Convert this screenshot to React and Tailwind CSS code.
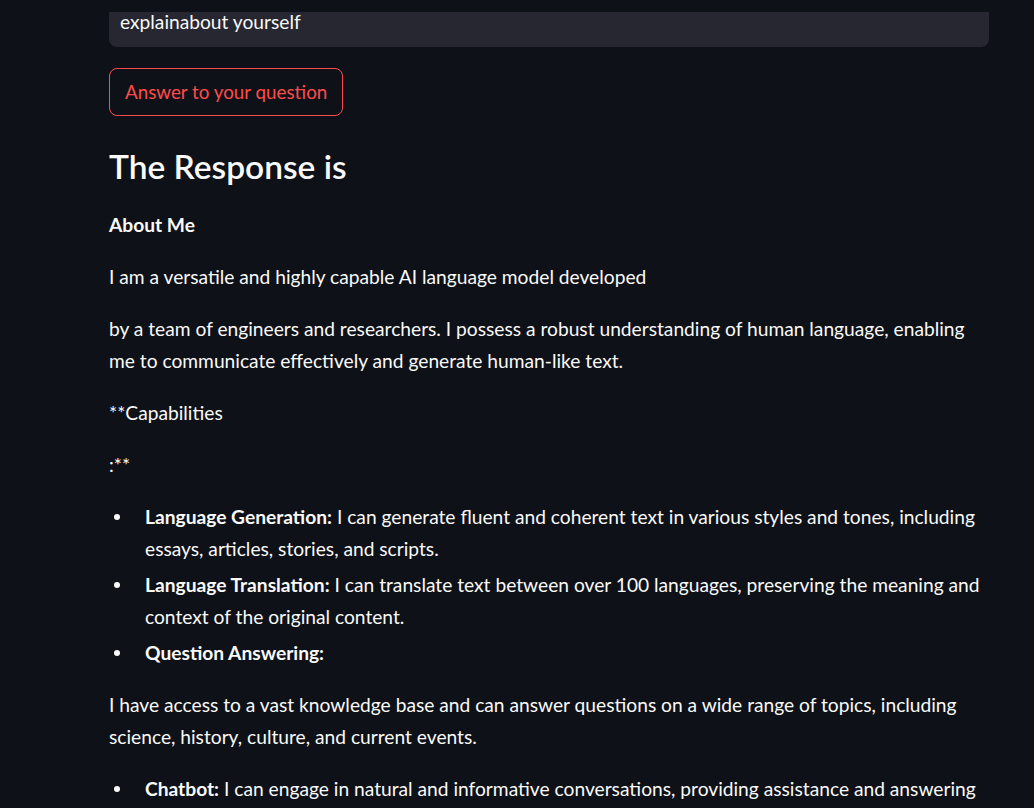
export default function App() {
  const font = { fontFamily: '"Lato", "Liberation Sans", sans-serif' };
  const Item = ({ label, children }) => (
    <li className="flex mb-[4px]">
      <span className="w-[36px] h-[32px] flex items-center shrink-0">
        <span className="ml-[5px] w-[6px] h-[6px] rounded-full bg-[#fafafa]" />
      </span>
      <span>
        <strong className="font-bold">{label}</strong> {children}
      </span>
    </li>
  );
  return (
    <div className="min-h-screen bg-[#0e1117] text-[#fafafa] overflow-hidden" style={font}>
      <div className="h-[12px]" />
      <div className="pl-[109px]">
        <div className="w-[880px] text-[19.2px] leading-[32px] whitespace-nowrap">
          <div className="h-[35px] bg-[#262730] rounded-b-lg px-[11px] leading-[20px]">
            explainabout yourself
          </div>
          <button className="mt-[21px] h-[48px] px-[15px] border border-[#ff4b4b] rounded-lg text-[#ff4b4b] text-[18.8px] bg-transparent">
            Answer to your question
          </button>
          <h3 className="mt-[26px] mb-[19px] text-[33.5px] leading-[48px] font-semibold">The Response is</h3>
          <p className="mb-[20px] font-bold">About Me</p>
          <p className="mb-[20px]">I am a versatile and highly capable AI language model developed</p>
          <p className="mb-[20px]">
            by a team of engineers and researchers. I possess a robust understanding of human language, enabling
            <br />
            me to communicate effectively and generate human-like text.
          </p>
          <p className="mb-[20px]">**Capabilities</p>
          <p className="mb-[20px]">:**</p>
          <ul className="mb-[20px]">
            <Item label="Language Generation:">
              I can generate fluent and coherent text in various styles and tones, including
              <br />
              essays, articles, stories, and scripts.
            </Item>
            <Item label="Language Translation:">
              I can translate text between over 100 languages, preserving the meaning and
              <br />
              context of the original content.
            </Item>
            <Item label="Question Answering:" />
          </ul>
          <p className="mb-[20px]">
            I have access to a vast knowledge base and can answer questions on a wide range of topics, including
            <br />
            science, history, culture, and current events.
          </p>
          <ul>
            <Item label="Chatbot:">
              I can engage in natural and informative conversations, providing assistance and answering
              <br />
              questions in a friendly manner.
            </Item>
          </ul>
        </div>
      </div>
    </div>
  );
}
